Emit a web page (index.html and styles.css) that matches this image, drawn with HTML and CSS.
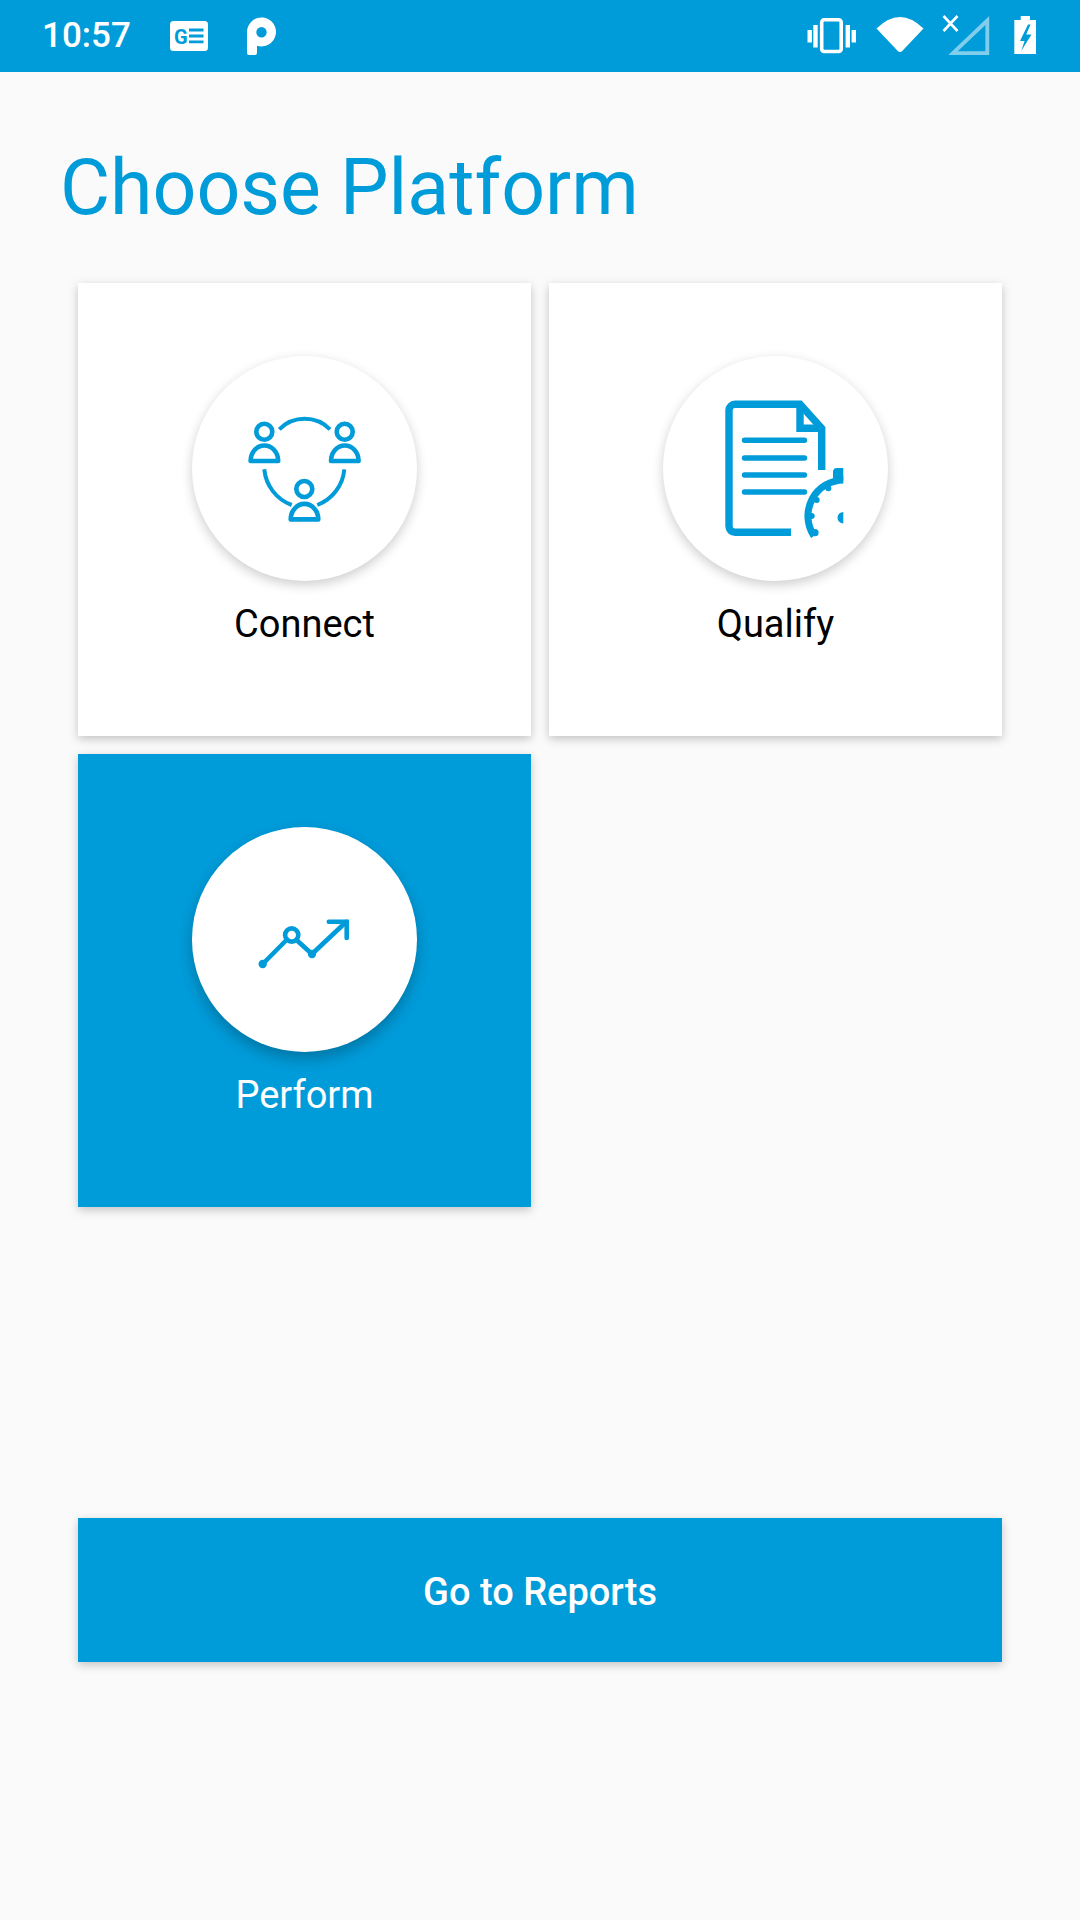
FILE: index.html
```html
<!DOCTYPE html>
<html lang="en">
<head>
<meta charset="utf-8">
<title>Choose Platform</title>
<link rel="stylesheet" href="styles.css">
</head>
<body>
<header class="status-bar">
  <span class="clock">10:57</span>
  <svg class="status-left" viewBox="170 0 106 72" aria-hidden="true">
    <rect x="170" y="21" width="38" height="30" rx="3.5" fill="#fff"/>
    <text class="news-g" x="174" y="43.5">G</text>
    <path d="M189 30H203.5M189 36H203.5M189 41.8H203.5" stroke="#009bd9" stroke-width="2.8" fill="none"/>
    <path fill="#fff" fill-rule="evenodd" d="M247 31.5a14.5 14.5 0 1 1 10 14.2V53a2 2 0 0 1-2 2h-6a2 2 0 0 1-2-2ZM261.5 27a5.2 5.2 0 1 0 0 10.4 5.2 5.2 0 0 0 0-10.4Z"/>
  </svg>
  <svg class="status-right" viewBox="807 0 230 72" aria-hidden="true">
    <rect x="821.7" y="19.7" width="19.5" height="31.8" rx="2.5" fill="none" stroke="#fff" stroke-width="3.6"/>
    <path d="M809.7 30V42.5M815.5 25V47.5M847.8 25V47.5M853.8 30V42.5" stroke="#fff" stroke-width="4.4" fill="none"/>
    <path fill="#fff" d="M876.5 28.5Q900 5.5 923.5 28.5L902 51.2Q900 53 898 51.2Z"/>
    <path d="M943.5 16L957.5 31M957.5 16L943.5 31" stroke="#fff" stroke-width="2.6" fill="none"/>
    <path d="M987.3 20.5V53.2H953Z" stroke="#fff" stroke-opacity=".5" stroke-width="3.8" fill="none"/>
    <path fill="#fff" d="M1020.7 16H1030V20H1036V54H1014.3V20H1020.7Z"/>
    <path fill="#009bd9" d="M1028 24.5L1020 41H1024.6L1021.2 51L1031.5 34.5H1026.2L1030.5 24.5Z"/>
  </svg>
</header>

<main class="screen">
  <h1 class="title">Choose Platform</h1>
  <section class="platforms">
    <article class="card">
      <div class="disc">
        <svg class="glyph" viewBox="0 0 225 225" aria-hidden="true">
          <g class="line">
            <circle cx="72.3" cy="75.7" r="8"/>
            <path class="join" d="M58.6 105a13.8 15.5 0 0 1 27.6 0Z"/>
            <circle cx="152.7" cy="75.7" r="8"/>
            <path class="join" d="M139 105a13.8 15.5 0 0 1 27.6 0Z"/>
            <circle cx="112.3" cy="133" r="8"/>
            <path class="join" d="M98.7 163.4a13.8 15.5 0 0 1 27.6 0Z"/>
            <path class="thin" d="M87.3 73.3A36 36 0 0 1 138 73.3M72.3 113.3A42 42 0 0 0 99.7 149M152.3 113.3A42 42 0 0 1 125.3 149"/>
          </g>
        </svg>
      </div>
      <h2 class="label">Connect</h2>
    </article>
    <article class="card">
      <div class="disc">
        <svg class="glyph" viewBox="0 0 225 225" aria-hidden="true">
          <defs><clipPath id="watch-clip"><rect x="0" y="0" width="180.3" height="225"/></clipPath></defs>
          <g class="line wide">
            <path d="M158.7 114V72.3L137 48.3H72a6 6 0 0 0-6 6V170.3a6 6 0 0 0 6 6H128"/>
            <path d="M137 48.3V72.3H158.7"/>
          </g>
          <path class="rules" d="M81.5 84.3H141.5M81.5 102H141.5M81.5 119H141.5M81.5 136H141.5"/>
          <g clip-path="url(#watch-clip)">
            <path class="arc" d="M151 180A36 36 0 0 1 181 124"/>
            <g class="solid">
              <circle cx="165.3" cy="132.3" r="3"/>
              <circle cx="153.7" cy="144" r="3"/>
              <circle cx="148.7" cy="160" r="3"/>
              <circle cx="152" cy="176.7" r="3.6"/>
              <circle cx="180.3" cy="161.7" r="5.8"/>
              <rect x="170" y="112" width="14" height="13" rx="4"/>
            </g>
          </g>
        </svg>
      </div>
      <h2 class="label">Qualify</h2>
    </article>
    <article class="card card-active">
      <div class="disc">
        <svg class="glyph" viewBox="0 0 225 225" aria-hidden="true">
          <g class="line trend">
            <path d="M70.7 137L95 112.5M104.5 113L120 127L154 95"/>
            <path d="M136.8 94.7H154.7V111"/>
            <circle cx="99.7" cy="108" r="6.6"/>
          </g>
          <g class="solid">
            <circle cx="70.7" cy="137" r="4.2"/>
            <circle cx="120" cy="127" r="4.2"/>
          </g>
        </svg>
      </div>
      <h2 class="label">Perform</h2>
    </article>
  </section>
  <button class="reports" type="button">Go to Reports</button>
</main>
</body>
</html>
```

FILE: styles.css
```css
* {
  box-sizing: border-box;
}

html,
body {
  margin: 0;
  height: 100%;
}

body {
  width: 1080px;
  height: 1920px;
  overflow: hidden;
  background: #fafafa;
  font-family: Roboto, "Liberation Sans", sans-serif;
}

.status-bar {
  display: flex;
  align-items: stretch;
  height: 72px;
  padding: 0 43px 0 42px;
  background: #009bd9;
  color: #fff;
}

.clock {
  align-self: center;
  width: 85px;
  font-size: 35px;
  font-weight: 500;
  line-height: 72px;
}

.status-left {
  width: 106px;
  height: 72px;
  margin-left: 43px;
}

.status-right {
  width: 230px;
  height: 72px;
  margin-left: auto;
}

.news-g {
  font-family: Roboto, sans-serif;
  font-size: 20px;
  font-weight: 700;
  fill: #009bd9;
}

.screen {
  padding: 0 78px;
}

.title {
  margin: 71px 0 0 -18px;
  color: #009bd9;
  font-size: 77px;
  font-weight: 400;
  line-height: 90px;
}

.platforms {
  display: grid;
  grid-template-columns: 453px 453px;
  grid-auto-rows: 453px;
  gap: 18px;
  margin-top: 50px;
}

.card {
  display: flex;
  flex-direction: column;
  align-items: center;
  padding-top: 73px;
  background: #fff;
  box-shadow: 0 3px 9px rgba(0, 0, 0, 0.22);
}

.card-active {
  background: #009bd9;
  color: #fff;
}

.disc {
  width: 225px;
  height: 225px;
  border-radius: 50%;
  background: #fff;
  box-shadow: 0 4px 12px rgba(0, 0, 0, 0.2);
}

.card-active .disc {
  box-shadow: 0 7px 14px rgba(0, 0, 0, 0.24);
}

.glyph {
  display: block;
  width: 225px;
  height: 225px;
}

.line {
  fill: none;
  stroke: #009bd9;
  stroke-width: 4.6;
}

.join {
  stroke-linejoin: round;
}

.thin {
  stroke-width: 4;
}

.wide {
  stroke-width: 7.4;
}

.rules {
  fill: none;
  stroke: #009bd9;
  stroke-width: 5.4;
  stroke-linecap: round;
}

.arc {
  fill: none;
  stroke: #009bd9;
  stroke-width: 7;
}

.solid {
  fill: #009bd9;
}

.trend {
  stroke-linecap: round;
}

.label {
  margin: 22px 0 0;
  font-size: 38px;
  font-weight: 400;
  line-height: 42px;
}

.reports {
  display: block;
  width: 924px;
  height: 144px;
  margin-top: 311px;
  padding: 3px 0 0;
  border: 0;
  background: #009bd9;
  box-shadow: 0 3px 9px rgba(0, 0, 0, 0.22);
  color: #fff;
  font-family: inherit;
  font-size: 38px;
  font-weight: 500;
}
```
